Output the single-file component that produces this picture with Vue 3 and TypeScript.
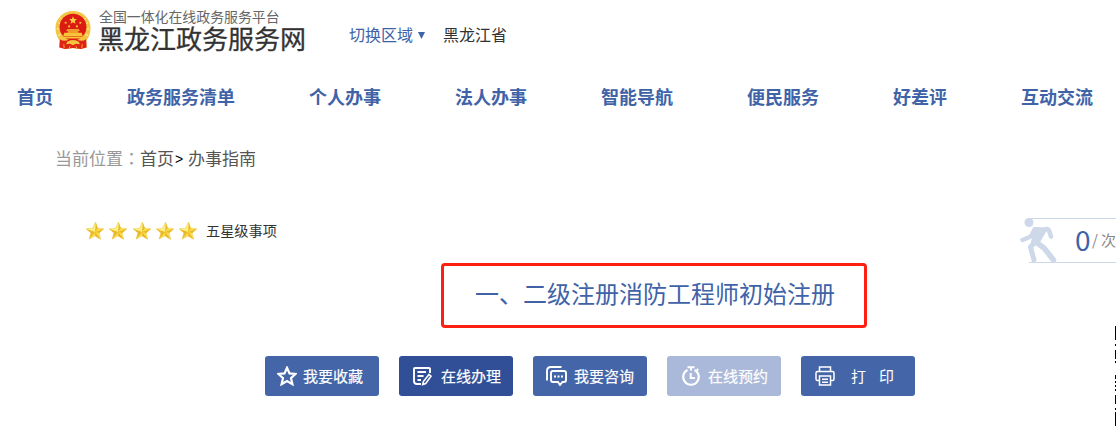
<script setup lang="ts">
interface Action {
  icon: 'star' | 'edit' | 'chat' | 'clock' | 'print'
  label: string
}

const navItems: string[] = ['首页', '政务服务清单', '个人办事', '法人办事', '智能导航', '便民服务', '好差评', '互动交流']

const actions: Action[] = [
  { icon: 'star', label: '我要收藏' },
  { icon: 'edit', label: '在线办理' },
  { icon: 'chat', label: '我要咨询' },
  { icon: 'clock', label: '在线预约' },
  { icon: 'print', label: '打印' },
]

// Dark runs [start, length] along the visible edge of the QR code
const qrRuns: [number, number][] = [
  [0, 14], [18, 2], [24, 9], [35, 2], [49, 4], [55, 2], [59, 2], [63, 2], [69, 9], [82, 2], [86, 14],
]
</script>

<template>
  <div class="page">
    <header class="header">
      <svg class="emblem" viewBox="0 0 36 40">
        <path d="M18 0C8 0 0 7.500 0 17.500c0 6 2 10 4.500 13L4 37l6 2 8-1 8 1 6-2-.5-6.500C34 27.500 36 23.500 36 17.500 36 7.500 28 0 18 0z" fill="#f3c544" />
        <path d="M3 12l3 2M1.500 18l3 1M5 7l2 3M31 7l-2 3M33 12l-3 2M34.500 18l-3 1M2.500 25l3-1M33.500 25l-3-1" stroke="#fff0a0" stroke-width="1" />
        <circle cx="18" cy="16.500" r="13.800" fill="#dc1c12" />
        <path d="M18 5.500l1.100 2.600 2.900.2-2.200 1.900.7 2.800-2.500-1.500-2.500 1.500.7-2.800L14 8.300l2.900-.2z" fill="#ffd040" />
        <g fill="#f8c437">
          <circle cx="10.500" cy="12" r="1.100" /><circle cx="25.500" cy="12" r="1.100" />
          <circle cx="14" cy="15.800" r="1.100" /><circle cx="22" cy="15.800" r="1.100" />
          <path d="M12 18.800h12l1 1.500H11zM12.500 20.800h11v1.300h-11zM9 22.300h18l1 3.500H8zM6.500 26.500h23v1.600h-23z" />
        </g>
        <path d="M4.500 29c3 2 6 2 9 .5L18 31l4.500-1.500c3 1.500 6 1.500 9-.5l.5 8.500-5.800 1.500-8.200-1-8.200 1L4 37.500z" fill="#df2415" />
        <path d="M12 31.500q6-3 12 0l1 2.500-4-.5-3 1.500-3-1.500-4 .5z" fill="#f5c440" />
        <path d="M8.500 34l.5 4M27.500 34l-.5 4M15 36l-1 2.500M21 36l1 2.500" stroke="#f0ab35" stroke-width="1" />
      </svg>
      <div class="brand">
        <span class="brand-sub">全国一体化在线政务服务平台</span>
        <span class="brand-name">黑龙江政务服务网</span>
      </div>
      <a class="switch">切换区域<svg class="caret" viewBox="0 0 7 7"><path d="M0 0h7L3.500 7z" fill="#4063a8" /></svg></a>
      <span class="region">黑龙江省</span>
    </header>

    <nav class="nav">
      <a v-for="item in navItems" :key="item">{{ item }}</a>
    </nav>

    <div class="crumbs">
      <span class="crumb-label">当前位置<span class="colon" lang="zh-TW">：</span></span><a>首页</a><span class="sep">&gt;</span><a>办事指南</a>
    </div>

    <div class="rating-row">
      <svg v-for="n in 5" :key="n" class="gold-star" viewBox="0 0 20 20">
        <path d="M10.500 1l2.200 6 6.300.7-4.800 4.200 1.600 6.600-5.700-3.600L4 18.200l2-6.300L1 7.800l6.500-.6z" fill="#fbdc45" stroke="#ecd27a" stroke-width=".5" />
        <path d="M10.500 1l-.3 10 2.500-4zM10.200 11l8.800-3.300-4.800 4.200zM10.200 11l5.600 7.500-5.700-3.600zM10.200 11L4 18.200l2-6.300zM10.200 11L1 7.800l5 4.100z" fill="#e9b82c" />
        <path d="M10.500 2L8 8l2 3zM2.500 8.200l5-.6 2 2.800z" fill="#fff08a" />
      </svg>
      <span class="rating-text">五星级事项</span>
      <div class="visits">
        <svg class="walker" viewBox="0 0 38 46" fill="none" stroke="#cdd8e9" stroke-linecap="round" stroke-linejoin="round">
          <circle cx="9" cy="4.500" r="4.500" fill="#cdd8e9" stroke="none" />
          <path d="M15 11l10 .5-8 14-4-2 3-7z" fill="#cdd8e9" stroke-width="4" />
          <path d="M14.500 11.500L11 18.500 2.500 22M26 11q3 0 3.500 3l1.500 4.500" stroke-width="4.500" />
          <path d="M16 24l8 6 9.500 12" stroke-width="5.500" />
          <path d="M15 24l-4.500 5L14 42" stroke-width="5" />
        </svg>
        <div class="visit-box"><b>0</b><span class="slash">/</span><span class="unit">次</span></div>
      </div>
    </div>

    <h1 class="title">一、二级注册消防工程师初始注册</h1>

    <div class="actions">
      <button v-for="a in actions" :key="a.icon" :class="['action', a.icon]">
        <svg v-if="a.icon === 'star'" class="icon" viewBox="0 0 20 20">
          <path d="M10 1.800l2.500 5.600 6 .6-4.500 4.100 1.400 6.100-5.400-3.200-5.400 3.200L6 12.100 1.500 8l6-.6z" stroke-width="2.200" />
        </svg>
        <svg v-else-if="a.icon === 'edit'" class="icon" viewBox="0 0 20 20">
          <path d="M17 7V2.800Q17 2 16 2H2Q1 2 1 3v12q0 3 3 3h4M4.500 6H13M4.500 10h6M4.500 14H8" stroke-width="1.900" />
          <path d="M16 8.500l2 1.700-5.300 7.300-3 1 .7-3z" stroke-width="1.600" />
        </svg>
        <svg v-else-if="a.icon === 'chat'" class="icon" viewBox="0 0 21 20">
          <path d="M1 14.500V5q0-4 4-4h10.500" stroke-width="1.900" />
          <path d="M7 5h11q2 0 2 2v7q0 2-2 2h-1.500l-2.500 3-2-3H7q-2 0-2-2V7q0-2 2-2z" stroke-width="1.900" />
          <path d="M8 10.500h2M11.500 10.500h2M15 10.500h2" stroke-width="1.900" />
        </svg>
        <svg v-else-if="a.icon === 'clock'" class="icon" viewBox="0 0 20 20">
          <path d="M6.500 4a7.800 7.800 0 1 0 7 0" stroke-width="2.100" />
          <path d="M6.500 1.200h7M10 1.500V4.500M9.700 7v5H14M15.800 3l1.400 1.400" stroke-width="2" />
        </svg>
        <svg v-else class="icon" viewBox="0 0 20 20">
          <path d="M4.500 5V1h11v4M4.500 14.500H2.500Q1 14.500 1 13V7q0-1.500 1.500-1.500h15Q19 5.500 19 7v6q0 1.500-1.500 1.500h-2M4.500 10h11v9h-11zM7 13.300h6M7 16.200h6" stroke-width="1.500" />
        </svg>
        <span>{{ a.label }}</span>
      </button>
    </div>

    <svg class="qr-edge" viewBox="0 0 1 100" shape-rendering="crispEdges">
      <rect v-for="[y, h] in qrRuns" :key="y" x="0" :y="y" width="1" :height="h" />
    </svg>
  </div>
</template>

<style>
body {
  margin: 0;
  background: #fff;
}
</style>

<style scoped>
.page {
  position: relative;
  width: 1116px;
  height: 439px;
  overflow: hidden;
  background: #fff;
  font-family: "Noto Sans CJK SC", sans-serif;
  color: #333;
  white-space: nowrap;
}
.header {
  display: flex;
  height: 71px;
  padding-left: 55px;
}
.emblem {
  width: 36px;
  height: 39px;
  margin-top: 11px;
}
.brand {
  display: flex;
  flex-direction: column;
  width: 208px;
  margin-left: 7px;
  padding-top: 7px;
}
.brand-sub {
  padding-left: 1px;
  font-size: 13.900px;
  line-height: 18px;
  color: #666;
}
.brand-name {
  font-size: 26px;
  line-height: 26px;
  -webkit-text-stroke: 0.3px #333;
}
.switch {
  display: flex;
  margin-left: 43px;
  width: 94px;
  font-size: 16px;
  line-height: 69px;
  color: #4063a8;
}
.caret {
  width: 7px;
  height: 7px;
  margin: 32px 0 0 5px;
}
.region {
  font-size: 16px;
  line-height: 69px;
}
.nav {
  display: flex;
  gap: 74px;
  height: 51px;
  padding-left: 17px;
  font-size: 18px;
  font-weight: 700;
  line-height: 50px;
  color: #4063a8;
}
.crumbs {
  display: flex;
  height: 72px;
  padding-left: 55px;
  font-size: 17px;
  line-height: 72px;
  color: #555;
}
.crumb-label {
  color: #999;
}
.colon {
  font-family: "Noto Sans CJK TC", sans-serif;
}
.sep {
  width: 13px;
  padding-left: 1px;
  font-family: "Liberation Sans", sans-serif;
  font-size: 14px;
  color: #000;
  line-height: 74px;
}
.rating-row {
  display: flex;
  height: 69px;
  padding-left: 85px;
}
.gold-star {
  width: 20px;
  height: 20px;
  margin: 27px 3.300px 0 0;
}
.rating-text {
  margin-left: 4.500px;
  font-size: 14.200px;
  line-height: 72px;
}
.visits {
  display: flex;
  margin: 24px 0 0 auto;
  width: 96px;
}
.walker {
  width: 38px;
  height: 46px;
  flex: none;
}
.visit-box {
  display: flex;
  box-sizing: border-box;
  width: 87px;
  height: 45px;
  margin-left: -29px;
  padding-left: 46px;
  border: solid #cdd8e9;
  border-width: 1px 0;
  line-height: 42px;
}
.visit-box b {
  width: 19px;
  font-size: 28px;
  font-weight: 400;
  line-height: 40px;
  color: #4063a8;
}
.slash,
.unit {
  font-size: 15px;
  color: #888;
}
.unit {
  margin-left: 3px;
}
.title {
  box-sizing: border-box;
  width: 426px;
  height: 65px;
  margin: 0 0 0 441px;
  padding-left: 31px;
  border: 3px solid #fc2013;
  border-radius: 4px;
  font-size: 24px;
  font-weight: 400;
  line-height: 54px;
  color: #4063a8;
}
.actions {
  display: flex;
  gap: 20px;
  margin: 28px 0 0 265px;
}
.action {
  display: flex;
  align-items: center;
  box-sizing: border-box;
  width: 114px;
  height: 40px;
  margin: 0;
  padding: 0 0 0 12px;
  border: 0;
  border-radius: 3px;
  background: #4466a9;
  color: #fff;
  font: 400 15px/40px "Noto Sans CJK SC", sans-serif;
  -webkit-text-stroke: 0.2px #fff;
}
.icon {
  width: 20px;
  height: 20px;
  flex: none;
  margin-right: 6px;
  fill: none;
  stroke: #fff;
}
.edit {
  padding-left: 14px;
  background: #304f96;
}
.edit .icon {
  margin-right: 8px;
}
.chat {
  padding-left: 13px;
}
.chat .icon {
  width: 21px;
  margin-right: 7px;
}
.clock {
  padding-left: 14px;
  background: #aab9d9;
}
.clock .icon {
  margin-right: 7px;
}
.print {
  padding-left: 14px;
  letter-spacing: 13px;
  -webkit-text-stroke: 0;
}
.print .icon {
  margin-right: 16px;
}
.qr-edge {
  position: absolute;
  left: 1115px;
  top: 326px;
  width: 1px;
  height: 100px;
}
</style>
